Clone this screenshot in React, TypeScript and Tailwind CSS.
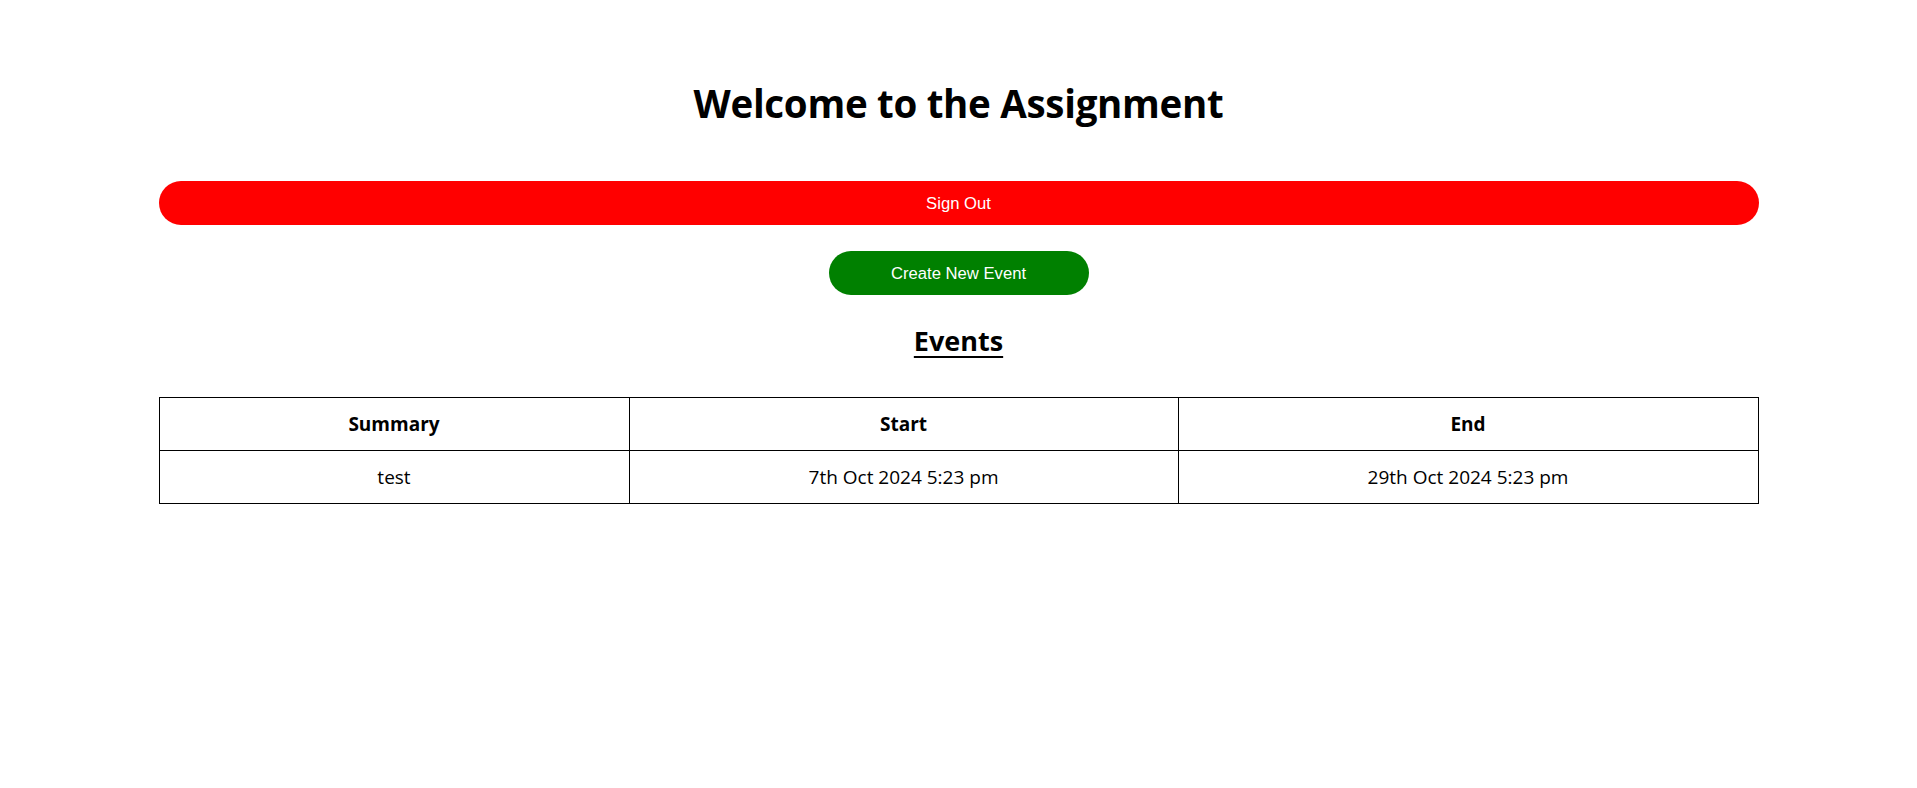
import React from "react";

export default function App() {
  return (
    <div className="min-h-[788px] w-full bg-white text-black font-['Open_Sans',sans-serif]">
      <div className="w-[1600px] mx-auto pt-[77px] flex flex-col items-center">
        <h1 className="text-[38.5px] leading-[53px] font-bold tracking-[-0.3px] text-center">
          Welcome to the Assignment
        </h1>
        <button className="mt-[51px] w-full h-[44px] rounded-full bg-[#ff0000] text-white text-[16.67px] font-['Liberation_Sans',Arial,sans-serif]">
          Sign Out
        </button>
        <button className="mt-[26px] w-[260px] h-[44px] rounded-full bg-[#008000] text-white text-[16.67px] font-['Liberation_Sans',Arial,sans-serif]">
          Create New Event
        </button>
        <h2 className="mt-[26px] text-[27px] leading-[40px] font-bold underline underline-offset-[5px] decoration-2">
          Events
        </h2>
        <table className="mt-[36px] w-full border-collapse border border-black text-[19px]">
          <thead>
            <tr>
              <th className="w-[470px] h-[53px] p-0 border border-black font-bold">Summary</th>
              <th className="w-[549px] h-[53px] p-0 border border-black font-bold">Start</th>
              <th className="h-[53px] p-0 border border-black font-bold">End</th>
            </tr>
          </thead>
          <tbody>
            <tr>
              <td className="h-[53px] p-0 border border-black text-center">test</td>
              <td className="h-[53px] p-0 border border-black text-center">7th Oct 2024 5:23 pm</td>
              <td className="h-[53px] p-0 border border-black text-center">29th Oct 2024 5:23 pm</td>
            </tr>
          </tbody>
        </table>
      </div>
    </div>
  );
}
